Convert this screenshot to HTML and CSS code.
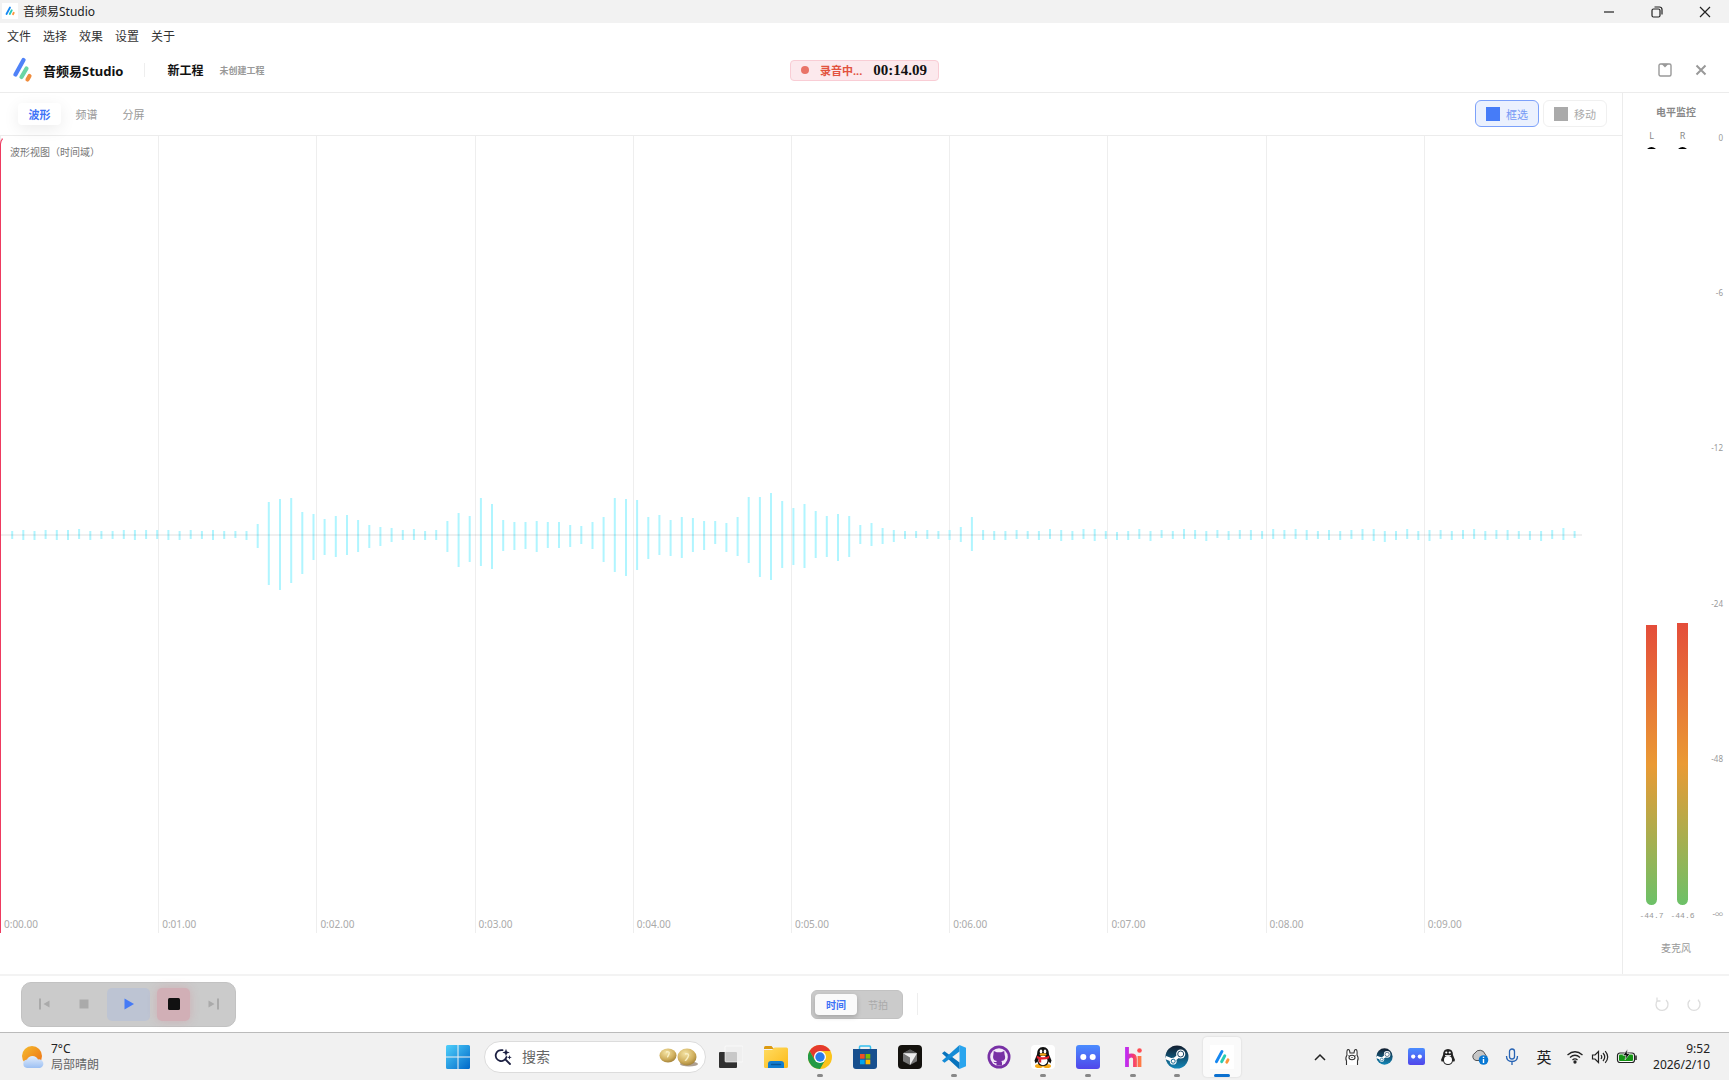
FILE: index.html
```
<!DOCTYPE html>
<html lang="zh-CN">
<head>
    <meta charset="UTF-8">
    <meta name="viewport" content="width=device-width, initial-scale=1.0">
    <title>音频易Studio</title>
    <link rel="stylesheet" href="styles.css">
</head>
<body>
    <!-- shared icons -->
    <svg class="defs" aria-hidden="true">
        <defs>
            <linearGradient id="gWin" x1="0" y1="0" x2="1" y2="1">
                <stop offset="0" stop-color="#4fd0fb"/><stop offset="1" stop-color="#0067c8"/>
            </linearGradient>
            <linearGradient id="gFolder" x1="0" y1="0" x2="1" y2="1">
                <stop offset="0" stop-color="#ffdc62"/><stop offset="1" stop-color="#fcba18"/>
            </linearGradient>
            <linearGradient id="gSteam" x1="0" y1="0" x2="0" y2="1">
                <stop offset="0" stop-color="#111d2e"/><stop offset="1" stop-color="#1387b8"/>
            </linearGradient>
            <linearGradient id="gFace" x1="0" y1="0" x2="0" y2="1">
                <stop offset="0" stop-color="#4a8cff"/><stop offset="1" stop-color="#5046ea"/>
            </linearGradient>
            <linearGradient id="gH" x1="0" y1="0" x2="1" y2="0">
                <stop offset="0" stop-color="#c02cf0"/><stop offset=".5" stop-color="#f5386f"/><stop offset="1" stop-color="#ff7a45"/>
            </linearGradient>
            <linearGradient id="gSun" x1="0" y1="0" x2="1" y2="1">
                <stop offset="0" stop-color="#f5bd2e"/><stop offset="1" stop-color="#ee6c12"/>
            </linearGradient>
            <linearGradient id="gCloud" x1="0" y1="0" x2="0" y2="1">
                <stop offset="0" stop-color="#e4eefc"/><stop offset="1" stop-color="#9cc0f3"/>
            </linearGradient>
            <radialGradient id="gGold" cx=".4" cy=".3" r=".8">
                <stop offset="0" stop-color="#f4e3a4"/><stop offset=".6" stop-color="#cfae5c"/><stop offset="1" stop-color="#93722c"/>
            </radialGradient>
            <symbol id="steam" viewBox="0 0 24 24">
                <circle cx="12" cy="12" r="11.5" fill="url(#gSteam)"/>
                <path d="M.6 12.5l7.4 3 5-4" fill="none" stroke="#fff" stroke-width="3.4"/>
                <circle cx="15.7" cy="9" r="4.6" fill="#fff"/>
                <circle cx="15.7" cy="9" r="3" fill="none" stroke="#1b4664" stroke-width="1"/>
                <circle cx="8.2" cy="16.2" r="3.4" fill="#fff"/>
                <circle cx="8.2" cy="16.2" r="2" fill="none" stroke="#17678f" stroke-width="1"/>
            </symbol>
            <symbol id="face" viewBox="0 0 24 24">
                <rect width="24" height="24" rx="3" fill="url(#gFace)"/>
                <circle cx="7.3" cy="12" r="3" fill="#fff"/>
                <circle cx="16.7" cy="12" r="3" fill="#fff"/>
            </symbol>
            <symbol id="logo" viewBox="0 0 20 26">
                <g fill="none" stroke-width="4.2" stroke-linecap="round">
                    <path d="M10.500 3L2.500 17.500" stroke="#4f82f8"/>
                    <path d="M13.500 11.500L8.500 20" stroke="#6bd5a5"/>
                    <path d="M16.500 19L14.500 22.500" stroke="#f08c3c"/>
                </g>
            </symbol>
            <symbol id="logo-bright" viewBox="0 0 20 20">
                <g fill="none" stroke-width="3.6" stroke-linecap="round">
                    <path d="M10 3L3 16" stroke="#1688f2"/>
                    <path d="M13.500 8.500L9.500 16" stroke="#27cbb4"/>
                    <path d="M17.500 13.500L16 16.500" stroke="#fb963c"/>
                </g>
            </symbol>
        </defs>
    </svg>

    <div class="app">
        <div class="title-bar">
            <div class="title-left">
                <span class="title-icon"><svg width="10" height="10"><use href="#logo-bright"/></svg></span>
                <span>音频易Studio</span>
            </div>
            <div class="window-buttons">
                <button type="button" aria-label="最小化"><svg width="12" height="12" viewBox="0 0 12 12"><path d="M1 6h10"/></svg></button>
                <button type="button" aria-label="还原"><svg width="12" height="12" viewBox="0 0 12 12"><rect x="1" y="3" width="8" height="8" rx="1.500"/><path d="M3.500 1h5a2.500 2.500 0 0 1 2.500 2.500v5"/></svg></button>
                <button type="button" aria-label="关闭"><svg width="12" height="12" viewBox="0 0 12 12"><path d="M1 1l10 10M11 1L1 11"/></svg></button>
            </div>
        </div>

        <nav class="menu-bar">
            <a href="#">文件</a>
            <a href="#">选择</a>
            <a href="#">效果</a>
            <a href="#">设置</a>
            <a href="#">关于</a>
        </nav>

        <header class="header">
            <div class="header-left">
                <svg class="logo" width="20" height="26"><use href="#logo"/></svg>
                <h1>音频易Studio</h1>
                <span class="header-divider"></span>
                <h2>新工程</h2>
                <span class="project-state">未创建工程</span>
            </div>
            <div class="record-badge">
                <span class="record-dot"></span>
                <span class="record-text">录音中...</span>
                <span class="record-time">00:14.09</span>
            </div>
            <div class="header-right">
                <button type="button" aria-label="保存"><svg width="14" height="14" viewBox="0 0 14 14"><rect x="1" y="1" width="12" height="12" rx="1.500"/><path d="M5 1.500h4L7 3.500z"/></svg></button>
                <button type="button" aria-label="关闭工程"><svg width="14" height="14" viewBox="0 0 14 14"><path class="bold" d="M2.500 2.500l9 9M11.500 2.500l-9 9"/></svg></button>
            </div>
        </header>

        <div class="workspace">
            <main class="editor">
                <div class="toolbar">
                    <div class="view-tabs">
                        <button type="button" class="tab active">波形</button>
                        <button type="button" class="tab">频谱</button>
                        <button type="button" class="tab">分屏</button>
                    </div>
                    <div class="modes">
                        <button type="button" class="mode active"><span class="mode-icon"></span>框选</button>
                        <button type="button" class="mode"><span class="mode-icon"></span>移动</button>
                    </div>
                </div>
                <div class="wave-panel">
                    <div class="wave-view">
                        <div class="time-grid">
                            <span>0:00.00</span><span>0:01.00</span><span>0:02.00</span><span>0:03.00</span><span>0:04.00</span><span>0:05.00</span><span>0:06.00</span><span>0:07.00</span><span>0:08.00</span><span>0:09.00</span>
                        </div>
                        <svg class="wave" viewBox="0 0 1582 120" preserveAspectRatio="none">
                            <path class="peaks" id="peaks"/>
                            <path class="axis" d="M0 60H1582"/>
                        </svg>
                        <span class="wave-label">波形视图（时间域）</span>
                        <span class="playhead"></span>
                    </div>
                </div>
            </main>

            <aside class="levels">
                <h3>电平监控</h3>
                <div class="meters">
                    <div class="meter">
                        <span>L</span>
                        <div class="track"><i class="peak"></i><div class="fill" style="height: 36.9%"></div></div>
                        <span class="value">-44.7</span>
                    </div>
                    <div class="meter">
                        <span>R</span>
                        <div class="track"><i class="peak"></i><div class="fill" style="height: 37.2%"></div></div>
                        <span class="value">-44.6</span>
                    </div>
                    <div class="scale">
                        <span>0</span><span>-6</span><span>-12</span><span>-24</span><span>-48</span><span>-∞</span>
                    </div>
                </div>
                <p class="device">麦克风</p>
            </aside>
        </div>

        <div class="control-bar">
            <div class="transport">
                <button type="button" aria-label="跳到开头"><svg width="14" height="14" viewBox="0 0 14 14"><path d="M2 1.500h2v11H2zM12.500 3.500v7L6.500 7z"/></svg></button>
                <button type="button" aria-label="停止"><svg width="14" height="14" viewBox="0 0 14 14"><path d="M2.500 2.500h9v9h-9z"/></svg></button>
                <button type="button" class="play" aria-label="播放"><svg width="14" height="14" viewBox="0 0 14 14"><path d="M2.500 1.500v11L12 7z"/></svg></button>
                <button type="button" class="record" aria-label="停止录音"><svg width="14" height="14" viewBox="0 0 14 14"><rect x="1" y="1" width="12" height="12" rx="1.500"/></svg></button>
                <button type="button" aria-label="跳到结尾"><svg width="14" height="14" viewBox="0 0 14 14"><path d="M10 1.500h2v11h-2zM1.500 3.500v7l6-3.500z"/></svg></button>
            </div>
            <div class="time-mode">
                <div class="switch">
                    <button type="button" class="active">时间</button>
                    <button type="button">节拍</button>
                </div>
                <span class="bar-divider"></span>
            </div>
            <div class="history">
                <button type="button" aria-label="撤销"><svg width="16" height="16" viewBox="0 0 16 16"><path d="M3.500 4.500a6 6 0 1 0 8.500-.5M3 1.500v3.500h3.500"/></svg></button>
                <button type="button" aria-label="重做"><svg width="16" height="16" viewBox="0 0 16 16"><path d="M4 4a6 6 0 1 0 8 0M12.500 5V3.500"/></svg></button>
            </div>
        </div>

        <footer class="taskbar">
            <div class="weather">
                <svg width="24" height="24" viewBox="0 0 24 24"><circle cx="11" cy="11" r="10" fill="url(#gSun)"/><path d="M6 23a4.300 4.300 0 0 1 0-8.500 6 6 0 0 1 11 0 4.300 4.300 0 0 1 2 8.500z" fill="url(#gCloud)"/></svg>
                <p>7°C<br><span>局部晴朗</span></p>
            </div>

            <div class="task-center">
                <button type="button" class="start" aria-label="开始">
                    <svg width="24" height="24" viewBox="0 0 24 24"><path d="M1.500 0H11.500V11.500H0V1.500A1.500 1.500 0 0 1 1.500 0zM12.500 0h10A1.500 1.500 0 0 1 24 1.500v10H12.500zM0 12.500h11.500V24h-10A1.500 1.500 0 0 1 0 22.500zM12.500 12.500H24v10a1.500 1.500 0 0 1-1.500 1.500h-10z" fill="url(#gWin)"/></svg>
                </button>
                <div class="search">
                    <svg width="18" height="18" viewBox="0 0 18 18"><path d="M8.500 2.200A5.500 5.500 0 1 0 12.500 9M11.500 11.500L16 16" fill="none" stroke="#1c2042" stroke-width="1.800" stroke-linecap="round"/><path d="M12 .8l1 2.700 2.700 1-2.700 1-1 2.700-1-2.700-2.700-1 2.700-1zM15.500 7l.6 1.700 1.700.6-1.700.6-.6 1.700-.6-1.700-1.700-.6 1.700-.6z" fill="#1c2042"/></svg>
                    <input type="text" placeholder="搜索" aria-label="搜索">
                    <svg width="40" height="20" viewBox="0 0 40 20"><ellipse cx="31" cy="17" rx="9" ry="2.500" fill="#ad9f91"/><ellipse cx="10" cy="8.500" rx="8.500" ry="7" fill="url(#gGold)"/><ellipse cx="29" cy="10" rx="9.500" ry="8.500" fill="url(#gGold)"/><path d="M8 5q4-1 3 2t-2 3M27 7q5-1 3 3t-3 3" fill="none" stroke="#f9efc4" stroke-width="1.500"/></svg>
                </div>
                <div class="apps">
                    <button type="button" aria-label="任务视图">
                        <svg width="24" height="24" viewBox="0 0 24 24"><rect y="7" width="18" height="16" rx="1" fill="#303030"/><rect x="6" y="1" width="18" height="16" rx="1" fill="#efefef" fill-opacity=".8" stroke="#fff" stroke-opacity=".6"/></svg>
                    </button>
                    <button type="button" aria-label="文件资源管理器">
                        <svg width="24" height="24" viewBox="0 0 24 24"><path d="M0 2.500Q0 1 1.500 1h6L10 4H0z" fill="#dc9a10"/><path d="M0 5h8l2.500-2.500h12Q24 2.500 24 4v17.500Q24 23 22.500 23h-21Q0 23 0 21.500z" fill="url(#gFolder)"/><path d="M4 23v-4q0-3 3-3h10q3 0 3 3v4z" fill="#127dd0"/><path d="M7.500 19.500h9" stroke="#075696" stroke-width="1.500" stroke-linecap="round"/></svg>
                    </button>
                    <button type="button" class="running" aria-label="Chrome">
                        <svg width="24" height="24" viewBox="0 0 24 24"><circle cx="12" cy="12" r="12" fill="#fbc31a"/><path d="M12 12V6h10.400A12 12 0 0 0 1.600 6L6.800 15z" fill="#e53a2e"/><path d="M1.600 6a12 12 0 0 0 10.400 18l5.200-9H6.800z" fill="#249a45"/><circle cx="12" cy="12" r="6" fill="#fff"/><circle cx="12" cy="12" r="4.700" fill="#2b7bea"/></svg>
                    </button>
                    <button type="button" aria-label="Microsoft Store">
                        <svg width="24" height="24" viewBox="0 0 24 24"><path d="M6.500 5V2q0-1 1-1h9q1 0 1 1v3" fill="none" stroke="#35c0ef" stroke-width="1.500"/><path d="M0 4h24v17q0 3-3 3H3q-3 0-3-3z" fill="#174f8e"/><path d="M7 9h4.700v4.700H7z" fill="#f25022"/><path d="M12.600 9h4.700v4.700h-4.700z" fill="#7fba00"/><path d="M7 14.600h4.700v4.700H7z" fill="#00a4ef"/><path d="M12.600 14.600h4.700v4.700h-4.700z" fill="#ffb900"/></svg>
                    </button>
                    <button type="button" aria-label="Cursor">
                        <svg width="24" height="24" viewBox="0 0 24 24"><rect width="24" height="24" rx="4" fill="#14120e"/><path d="M12 4.500l7 3.700v8L12 20l-7-3.800v-8z" fill="#777"/><path d="M12 4.500l7 3.700H5z" fill="#575757"/><path d="M5 8.200h14L12 20v-7.500z" fill="#eee"/></svg>
                    </button>
                    <button type="button" class="running" aria-label="VS Code">
                        <svg width="24" height="24" viewBox="0 0 24 24"><path d="M17.500 0L24 2.800v18.400L17.500 24z" fill="#2aa5ee"/><path d="M17.500 6.500v11L2.500 6.200 0 8.200l16.500 15.300 1 .5V17.500z" fill="#0873bd"/><path d="M17.500 0L0 15.800l2.500 2 15-11.300z" fill="#148bd6"/></svg>
                    </button>
                    <button type="button" aria-label="GitHub">
                        <svg width="24" height="24" viewBox="0 0 24 24"><circle cx="12" cy="12" r="11.500" fill="#7830a5"/><circle cx="12" cy="12" r="8.800" fill="#f3eaf8"/><path d="M6.800 6l3 1.300h4.400l3-1.300.4 3.400q2.200 5.800-3.200 6.700l.6 1.400v3H9.500v-2.200q-2.200.4-3.200-1.800 1.600.9 3.200.3l.3-.7q-5-1-3.400-6.700z" fill="#7830a5"/></svg>
                    </button>
                    <button type="button" class="running" aria-label="QQ">
                        <svg width="24" height="24" viewBox="0 0 24 24"><rect width="24" height="24" rx="4" fill="#fff"/><ellipse cx="8" cy="21" rx="4" ry="2" fill="#f8aa18"/><ellipse cx="16" cy="21" rx="4" ry="2" fill="#f8aa18"/><path d="M12 2q6 0 6 7.500l2.500 6-1 3-2-2Q17 21 12 21t-5.500-4.500l-2 2-1-3L6 9.500Q6 2 12 2z" fill="#111"/><ellipse cx="12" cy="15.500" rx="4.500" ry="4.700" fill="#fff"/><ellipse cx="10" cy="6.500" rx="1.300" ry="2" fill="#fff"/><ellipse cx="14" cy="6.500" rx="1.300" ry="2" fill="#fff"/><ellipse cx="12" cy="9.500" rx="3.500" ry="1.200" fill="#f8aa18"/><path d="M5.800 10.800q6.200 3 12.400 0v2.400q-4 1.800-8 1.300v3H7.800v-3.600l-2-.7z" fill="#e5202d"/></svg>
                    </button>
                    <button type="button" class="running" aria-label="聊天">
                        <svg width="24" height="24"><use href="#face"/></svg>
                    </button>
                    <button type="button" class="running" aria-label="HBuilder">
                        <svg width="24" height="24" viewBox="0 0 24 24"><path d="M6 2v20M6 14q1-3.500 4.500-3.500T14 14v8M18.500 11v11" fill="none" stroke="url(#gH)" stroke-width="3.800"/><circle cx="18.500" cy="5.500" r="2.300" fill="#ff4b52"/></svg>
                    </button>
                    <button type="button" class="running" aria-label="Steam">
                        <svg width="24" height="24"><use href="#steam"/></svg>
                    </button>
                    <button type="button" class="current" aria-label="音频易Studio">
                        <span class="app-tile"><svg width="16" height="16"><use href="#logo-bright"/></svg></span>
                    </button>
                </div>
            </div>

            <div class="tray">
                <button type="button" aria-label="显示隐藏的图标"><svg width="12" height="8" viewBox="0 0 12 8" fill="none" stroke="#222" stroke-width="1.500"><path d="M1 7l5-5 5 5"/></svg></button>
                <button type="button" aria-label="Ollama"><svg width="16" height="18" viewBox="0 0 16 18" fill="#fff" stroke="#333" stroke-width="1.100"><path d="M2.500 17v-4q-1.500-3 .5-6-.5-5 1-5.500T6 5h4Q10.500 1 12 1.500t1 5.500q2 3 .5 6v4"/><ellipse cx="8" cy="9.500" rx="3" ry="2.200"/><path d="M8 9v1M4.500 7.500v.5M11.500 7.500v.5"/></svg></button>
                <button type="button" aria-label="Steam"><svg width="17" height="17"><use href="#steam"/></svg></button>
                <button type="button" aria-label="聊天"><svg width="17" height="17"><use href="#face"/></svg></button>
                <button type="button" aria-label="QQ"><svg width="16" height="18" viewBox="0 0 16 18"><path d="M8 1q5 0 5 6l2 5-1 2-1-1q-1 4-5 4t-5-4l-1 1-1-2 2-5q0-6 5-6z" fill="#222"/><ellipse cx="8" cy="12" rx="4" ry="4" fill="#fff"/><circle cx="6.300" cy="4.500" r="1.100" fill="#fff"/><circle cx="9.700" cy="4.500" r="1.100" fill="#fff"/><path d="M5 7.500h6" stroke="#ddd"/></svg></button>
                <button type="button" aria-label="OneDrive"><svg width="18" height="16" viewBox="0 0 18 16"><path d="M5 11.500a4 4 0 0 1-1-7.500 5.500 5.500 0 0 1 10 1l2 3-5 3.500z" fill="#c6c6c6" stroke="#555"/><circle cx="12.500" cy="11" r="4.800" fill="#0878d4"/><path d="M12.500 10v4M12.500 7.800v1.200" stroke="#fff" stroke-width="1.400"/></svg></button>
                <button type="button" aria-label="麦克风"><svg width="14" height="18" viewBox="0 0 14 18" fill="none" stroke="#2864b4" stroke-width="1.300"><rect x="4.500" y="1" width="5" height="10" rx="2.500"/><path d="M1.500 8q0 5.500 5.500 5.500T12.500 8M7 13.500V17"/></svg></button>
                <button type="button" class="ime">英</button>
                <button type="button" class="status" aria-label="网络、音量和电池">
                    <svg width="18" height="14" viewBox="0 0 18 14" fill="none" stroke="#222" stroke-width="1.300"><path d="M1.500 5q7.500-6.500 15 0M4 7.500q5-4.500 10 0M6.500 10q2.500-2.300 5 0"/><circle cx="9" cy="12" r="1" fill="#222"/></svg>
                    <svg width="18" height="14" viewBox="0 0 18 14" fill="none" stroke="#222" stroke-width="1.200"><path d="M1.500 5h2.500l3.500-3.500v11L4 9H1.500zM10 5q1.500 2 0 4M12 3q3.500 4 0 8M14.200 1.200q5 5.800 0 11.600"/></svg>
                    <svg width="22" height="16" viewBox="0 0 22 16"><rect x="1.500" y="4" width="17" height="9.500" rx="2.500" fill="#fff" stroke="#222" stroke-width="1.200"/><rect x="3" y="5.500" width="14" height="6.500" rx="1" fill="#149414"/><path d="M20 6.500v4.500" stroke="#222" stroke-width="1.500"/><path d="M11.500 0L7 6.500h3L9 11l5-6.500h-3z" fill="#111" stroke="#eee" stroke-width=".6"/></svg>
                </button>
                <p class="clock">9:52<br>2026/2/10</p>
            </div>
        </footer>
    </div>

    <script>
        // [up, down] length of every peak on each side of the axis
        const peaks = [
            [4,4],[5,5],[4,5],[5,4],[5,5],[5,5],[6,4],[4,5],[4,4],[4,4],[5,4],[5,5],[5,4],[5,4],[5,5],[4,5],[5,4],[4,4],[5,5],[4,4],
            [4,3],[4,5],[11,13],[33,50],[36,55],[37,48],[23,39],[21,25],[16,20],[19,22],[20,20],[15,17],[10,13],[8,11],[7,7],[5,5],[6,5],[4,5],[5,5],
            [14,17],[22,32],[19,27],[37,31],[31,34],[15,16],[13,15],[13,14],[14,17],[13,13],[13,13],[10,12],[9,9],[13,14],
            [18,27],[37,37],[36,41],[35,35],[18,24],[20,20],[15,21],[18,23],[17,17],[14,15],[14,9],[12,17],
            [18,21],[38,28],[38,42],[42,45],[34,33],[27,30],[31,33],[24,23],[19,22],[21,26],[19,22],[10,9],[12,11],[7,9],[5,7],
            [4,4],[4,3],[5,4],[4,4],[5,5],[8,7],[18,16],[5,5],[4,5],[4,5],[5,4],[4,4],[4,5],[6,4],[5,6],[4,5],[6,4],[6,6],[4,4],[3,5],
            [4,5],[6,4],[4,6],[5,3],[4,4],[6,4],[5,4],[4,6],[5,3],[4,5],[5,4],[5,5],[4,4],[6,4],[5,4],[6,4],[5,5],[4,4],[5,5],[4,5],
            [5,4],[6,5],[6,6],[4,7],[4,5],[6,4],[4,5],[5,6],[5,4],[4,5],[5,4],[6,4],[4,5],[5,4],[5,5],[4,4],[4,5],[4,6],[5,4],[7,5],[4,3]
        ];
        const step = 11.16;

        let d = '';
        peaks.forEach(function (p, i) {
            const x = 1 + (i + 1) * step;
            d += 'M' + x.toFixed(1) + ' ' + (60 - p[0]) + 'V' + (60 + p[1]);
        });
        document.getElementById('peaks').setAttribute('d', d);
    </script>
</body>
</html>
```
FILE: styles.css
```
* {
    margin: 0;
    padding: 0;
    box-sizing: border-box;
}

body {
    font-family: "Noto Sans", "Noto Sans CJK SC", sans-serif;
    font-size: 12px;
    color: #222;
    background: #fff;
}

button {
    font: inherit;
    color: inherit;
    background: none;
    border: none;
    display: flex;
    align-items: center;
    justify-content: center;
    cursor: pointer;
}

svg {
    display: block;
    flex-shrink: 0;
}

.defs {
    position: absolute;
    width: 0;
    height: 0;
}

.app {
    display: flex;
    flex-direction: column;
    height: 100vh;
    overflow: hidden;
}

/* window title and menu */
.title-bar {
    display: flex;
    justify-content: space-between;
    height: 23px;
    background: #f2f2f2;
}

.title-left {
    display: flex;
    align-items: center;
    gap: 5px;
    padding: 0 0 1px 2px;
}

.title-icon {
    display: flex;
    align-items: center;
    justify-content: center;
    width: 16px;
    height: 16px;
    background: #fff;
}

.window-buttons {
    display: flex;
}

.window-buttons button {
    width: 48px;
}

.window-buttons svg {
    fill: none;
    stroke: #222;
    stroke-width: 1.2;
}

.menu-bar {
    display: flex;
    align-items: center;
    gap: 12px;
    height: 27px;
    padding: 0 0 1px 7px;
}

.menu-bar a {
    color: #333;
    text-decoration: none;
}

/* project header */
.header {
    display: grid;
    grid-template-columns: 1fr auto 1fr;
    align-items: center;
    height: 43px;
    padding-bottom: 2px;
    border-bottom: 1px solid #ececec;
}

.header-left {
    display: flex;
    align-items: center;
    padding-left: 13px;
}

.header h1 {
    margin-left: 10px;
    font-size: 13px;
    color: #111;
}

.header-divider {
    width: 1px;
    height: 14px;
    margin: 0 22px 0 21px;
    background: #eee;
}

.header h2 {
    font-size: 12px;
    color: #111;
}

.project-state {
    margin-left: 16px;
    font-size: 9px;
    font-weight: bold;
    color: #999;
}

.record-badge {
    display: flex;
    align-items: center;
    height: 21px;
    padding: 0 11px 0 10px;
    background: #fce9ed;
    border: 1px solid #f9cdd5;
    border-radius: 4px;
}

.record-dot {
    width: 8px;
    height: 8px;
    background: #e97468;
    border-radius: 50%;
}

.record-text {
    margin: 0 11px;
    font-size: 11px;
    font-weight: bold;
    color: #e2533f;
}

.record-time {
    font-family: "Liberation Serif", serif;
    font-size: 15px;
    font-weight: bold;
    color: #111;
}

.header-right {
    display: flex;
    justify-content: flex-end;
    padding-right: 16px;
    gap: 12px;
}

.header-right button {
    width: 24px;
    height: 24px;
}

.header-right svg {
    fill: none;
    stroke: #999;
    stroke-width: 1.4;
}

.header-right .bold {
    stroke-width: 2;
}

/* editor */
.workspace {
    display: flex;
    flex: 1;
    min-height: 0;
    border-bottom: 2px solid #f3f3f3;
}

.editor {
    display: flex;
    flex-direction: column;
    flex: 1;
}

.toolbar {
    display: flex;
    align-items: center;
    justify-content: space-between;
    height: 43px;
    padding: 0 15px 1px 18px;
    border-bottom: 1px solid #ececec;
}

.view-tabs,
.modes {
    display: flex;
    gap: 4px;
}

.tab {
    width: 43px;
    height: 22px;
    font-size: 11px;
    color: #999;
    border-radius: 4px;
}

.tab.active {
    font-weight: bold;
    color: #3e73f7;
    background: #fff;
    box-shadow: 0 4px 16px rgba(0, 0, 0, 0.08);
}

.mode {
    gap: 6px;
    width: 64px;
    height: 27px;
    font-size: 11px;
    color: #aaa;
    border: 1px solid #f0f0f0;
    border-radius: 6px;
}

.mode-icon {
    width: 14px;
    height: 14px;
    background: #aaa;
}

.mode.active {
    color: #7599f5;
    background: #ebf1fe;
    border-color: #7ca1fa;
}

.mode.active .mode-icon {
    background: #467cf8;
}

.wave-panel {
    display: flex;
    flex: 1;
    padding-bottom: 41px;
}

.wave-view {
    position: relative;
    display: flex;
    align-items: center;
    flex: 1;
    padding-right: 40px;
}

.time-grid {
    display: grid;
    grid-template-columns: repeat(10, 1fr);
    width: 100%;
    height: 100%;
}

.time-grid span {
    display: flex;
    align-items: flex-end;
    padding: 0 0 2px 3px;
    font-size: 10px;
    color: #aaa;
    border-left: 1px solid #eee;
}

.wave {
    position: absolute;
    left: 0;
    width: calc(100% - 40px);
    height: 120px;
    fill: none;
}

.axis {
    stroke: rgba(0, 0, 0, 0.13);
    stroke-width: 1;
}

.peaks {
    stroke: #b0f5ff;
    stroke-width: 2;
}

.wave-label {
    position: absolute;
    top: 8px;
    left: 10px;
    font-size: 10px;
    color: #777;
}

.playhead {
    position: absolute;
    top: 0;
    left: 0;
    width: 8px;
    height: 100%;
    border-left: 1px solid #ee3a60;
    border-top: 1px solid transparent;
    border-top-left-radius: 8px;
}

/* level meters */
.levels {
    display: flex;
    flex-direction: column;
    align-items: center;
    width: 107px;
    padding: 11px 6px 18px 13px;
    border-left: 1px solid #ececec;
}

.levels h3 {
    align-self: flex-start;
    margin-left: 20px;
    font-size: 10px;
    line-height: 16px;
    color: #888;
}

.meters {
    display: flex;
    flex: 1;
    width: 100%;
    padding: 10px 0 18px;
}

.meter {
    display: flex;
    flex-direction: column;
    align-items: center;
    gap: 5px;
    width: 31px;
    font-size: 9px;
    line-height: 12px;
    color: #888;
}

.track {
    display: flex;
    flex-direction: column;
    justify-content: space-between;
    flex: 1;
    width: 11px;
    border-radius: 6px;
    overflow: hidden;
}

.peak {
    height: 2px;
    background: #000;
}

.fill {
    background: linear-gradient(to top, #6cc168, #ea9a34 50%, #e44d3a);
}

.value {
    font-family: "Liberation Mono", monospace;
    font-size: 8px;
    color: #999;
}

.scale {
    display: flex;
    flex-direction: column;
    justify-content: space-between;
    flex: 1;
    padding: 3px 0;
    font-size: 8px;
    line-height: 10px;
    text-align: right;
    color: #999;
}

.device {
    align-self: flex-start;
    margin-left: 25px;
    font-size: 10px;
    line-height: 16px;
    color: #999;
}

/* transport */
.control-bar {
    display: grid;
    grid-template-columns: 1fr auto 1fr;
    align-items: center;
    height: 56px;
    padding: 0 21px;
}

.transport {
    display: flex;
    justify-self: start;
    gap: 7px;
    padding: 5px;
    background: #cbcbcb;
    border: 1px solid #c2c2c2;
    border-radius: 10px;
}

.transport button {
    width: 33px;
    height: 33px;
    border-radius: 5px;
}

.transport svg {
    fill: #aaa;
}

.transport .play {
    width: 43px;
    background: #bdc4d3;
}

.transport .play svg {
    fill: #457af6;
}

.transport .record {
    background: #d1afb6;
    box-shadow: 0 0 10px rgba(220, 100, 120, 0.25);
}

.transport .record svg {
    fill: #111;
}

.time-mode {
    display: flex;
    align-items: center;
    gap: 14px;
}

.switch {
    display: flex;
    padding: 3px;
    background: #cbcbcb;
    border: 1px solid #c2c2c2;
    border-radius: 6px;
}

.switch button {
    width: 42px;
    height: 21px;
    font-size: 10px;
    color: #aaa;
    border-radius: 4px;
}

.switch .active {
    font-weight: bold;
    color: #3e73f7;
    background: #fafafa;
    box-shadow: 0 2px 5px rgba(0, 0, 0, 0.2);
}

.bar-divider {
    width: 1px;
    height: 22px;
    background: #eee;
}

.history {
    display: flex;
    justify-content: flex-end;
    gap: 8px;
    padding-right: 2px;
}

.history button {
    width: 24px;
    height: 24px;
}

.history svg {
    fill: none;
    stroke: #ddd;
    stroke-width: 1.3;
}

/* taskbar */
.taskbar {
    display: grid;
    grid-template-columns: 1fr auto 1fr;
    align-items: center;
    height: 48px;
    background: #f1f1f1;
    border-top: 1px solid #bbb;
}

.weather {
    display: flex;
    align-items: center;
    gap: 6px;
    padding-left: 21px;
    line-height: 16px;
}

.weather span {
    color: #666;
}

.task-center {
    display: flex;
    align-items: center;
    margin-right: 47px;
}

.start {
    width: 40px;
    height: 40px;
    margin-right: 6px;
}

.search {
    display: flex;
    align-items: center;
    width: 222px;
    height: 32px;
    margin-right: 3px;
    padding: 0 7px 0 9px;
    background: #fff;
    border: 1px solid #dcdcdc;
    border-radius: 16px;
}

.search input {
    flex: 1;
    min-width: 0;
    padding: 0 10px;
    font: inherit;
    font-size: 14px;
    background: none;
    border: none;
    outline: none;
}

.search input::placeholder {
    color: #666;
}

.apps {
    display: grid;
    grid-template-columns: repeat(12, 1fr);
    justify-items: center;
    width: 535px;
}

.apps button {
    position: relative;
    width: 38px;
    height: 40px;
    border-radius: 4px;
}

.apps .current {
    background: #fafafa;
    box-shadow: 0 0 2px rgba(0, 0, 0, 0.15);
}

.apps .running::after,
.apps .current::after {
    content: "";
    position: absolute;
    bottom: 0;
    left: 50%;
    width: 6px;
    height: 3px;
    border-radius: 2px;
    background: #888;
    transform: translateX(-50%);
}

.apps .current::after {
    width: 16px;
    background: #0b70cf;
}

.app-tile {
    display: flex;
    align-items: center;
    justify-content: center;
    width: 24px;
    height: 24px;
    background: #fff;
}

.tray {
    display: flex;
    align-items: center;
    justify-content: flex-end;
    padding-right: 19px;
}

.tray button {
    width: 32px;
    height: 32px;
}

.tray .ime {
    font-size: 15px;
}

.tray .status {
    gap: 7px;
    width: 84px;
}

.clock {
    width: 66px;
    line-height: 16px;
    text-align: right;
}
```
